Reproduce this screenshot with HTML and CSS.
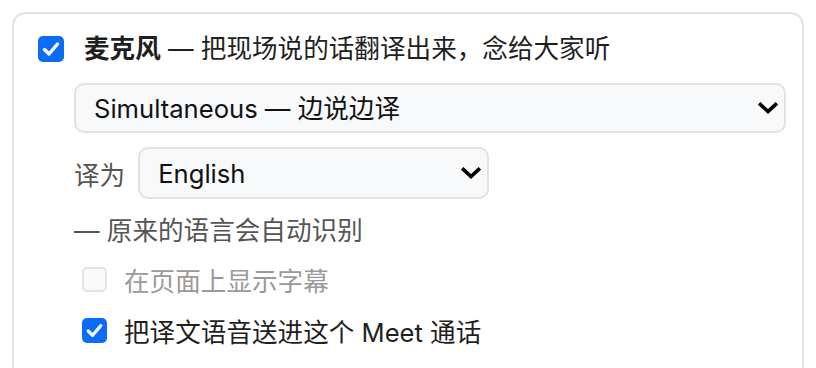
FILE: index.html
```html
<html>

<head>
    <link rel="stylesheet" href="styles.css">
</head>

<body>
    <div class="card">
        <label class="row main">
            <span class="box on">
                <svg viewBox="0 0 26 26" width="26" height="26"><path d="M6.5 13.5 L11 18 L19.5 8" fill="none" stroke="#fff" stroke-width="3.4" stroke-linecap="round" stroke-linejoin="round"/></svg>
            </span>
            <span class="title"><b>麦克风</b> — 把现场说的话翻译出来，念给大家听</span>
        </label>
        <div class="options">
            <div class="pick wide">
                <select>
                    <option>Simultaneous — 边说边译</option>
                </select>
                <svg class="chev" viewBox="0 0 20 12" width="20" height="12"><path d="M2.5 2.5 L10 9.5 L17.5 2.5" fill="none" stroke="#000" stroke-width="3.6" stroke-linecap="square"/></svg>
            </div>
            <div class="row lang">
                <span class="label">译为</span>
                <div class="pick short">
                    <select>
                        <option>English</option>
                    </select>
                    <svg class="chev" viewBox="0 0 20 12" width="20" height="12"><path d="M2.5 2.5 L10 9.5 L17.5 2.5" fill="none" stroke="#000" stroke-width="3.6" stroke-linecap="square"/></svg>
                </div>
            </div>
            <div class="hint">— 原来的语言会自动识别</div>
            <label class="row sub off">
                <span class="box"></span>
                <span>在页面上显示字幕</span>
            </label>
            <label class="row sub">
                <span class="box on">
                    <svg viewBox="0 0 26 26" width="25" height="25"><path d="M6.5 13.5 L11 18 L19.5 8" fill="none" stroke="#fff" stroke-width="3.4" stroke-linecap="round" stroke-linejoin="round"/></svg>
                </span>
                <span>把译文语音送进这个 Meet 通话</span>
            </label>
        </div>
    </div>
</body>

</html>
```

FILE: styles.css
```css
* {
    margin: 0;
    box-sizing: border-box;
}

body {
    background: #fff;
    font-family: Inter, "Noto Sans CJK SC", sans-serif;
    color: #1f1f1f;
    font-size: 25.6px;
}

.card {
    margin: 12px 0 0 12px;
    width: 792px;
    height: 400px;
    border: 2px solid #e3e3e3;
    border-radius: 14px;
    padding: 21px 16px 0 24px;
}

.row {
    display: flex;
    align-items: center;
}

.main {
    height: 28px;
    gap: 20px;
}

.title {
    line-height: 28px;
}

.title b {
    font-weight: 700;
}

.box {
    width: 26px;
    height: 26px;
    border-radius: 5px;
    border: 2px solid #e4e4e4;
    background: #fafafa;
    display: flex;
    align-items: center;
    justify-content: center;
    flex: none;
}

.box.on {
    background: #0b6cf5;
    border: none;
}

.options {
    margin-left: 36px;
}

.pick {
    position: relative;
}

.pick select {
    appearance: none;
    width: 100%;
    border: 2px solid #e2e2e2;
    border-radius: 10px;
    background: #f8f9fa;
    font-family: Inter, "Noto Sans CJK SC", sans-serif;
    font-size: 25.6px;
    color: #111;
    padding: 0 18px;
}

.chev {
    position: absolute;
    right: 8px;
    top: 50%;
    margin-top: -6px;
    pointer-events: none;
}

.wide {
    margin-top: 20px;
    width: 712px;
}

.wide select {
    height: 50px;
}

.lang {
    margin-top: 14px;
    gap: 13px;
}

.label {
    color: #555;
}

.short {
    width: 351px;
}

.short select {
    height: 52px;
}

.hint {
    margin-top: 16px;
    line-height: 32px;
    color: #555;
}

.sub {
    margin-left: 8px;
    gap: 17px;
    height: 32px;
}

.sub .box {
    width: 25px;
    height: 25px;
}

.off {
    margin-top: 16px;
    color: #9a9a9a;
}

.off + .sub {
    margin-top: 19px;
}
```
